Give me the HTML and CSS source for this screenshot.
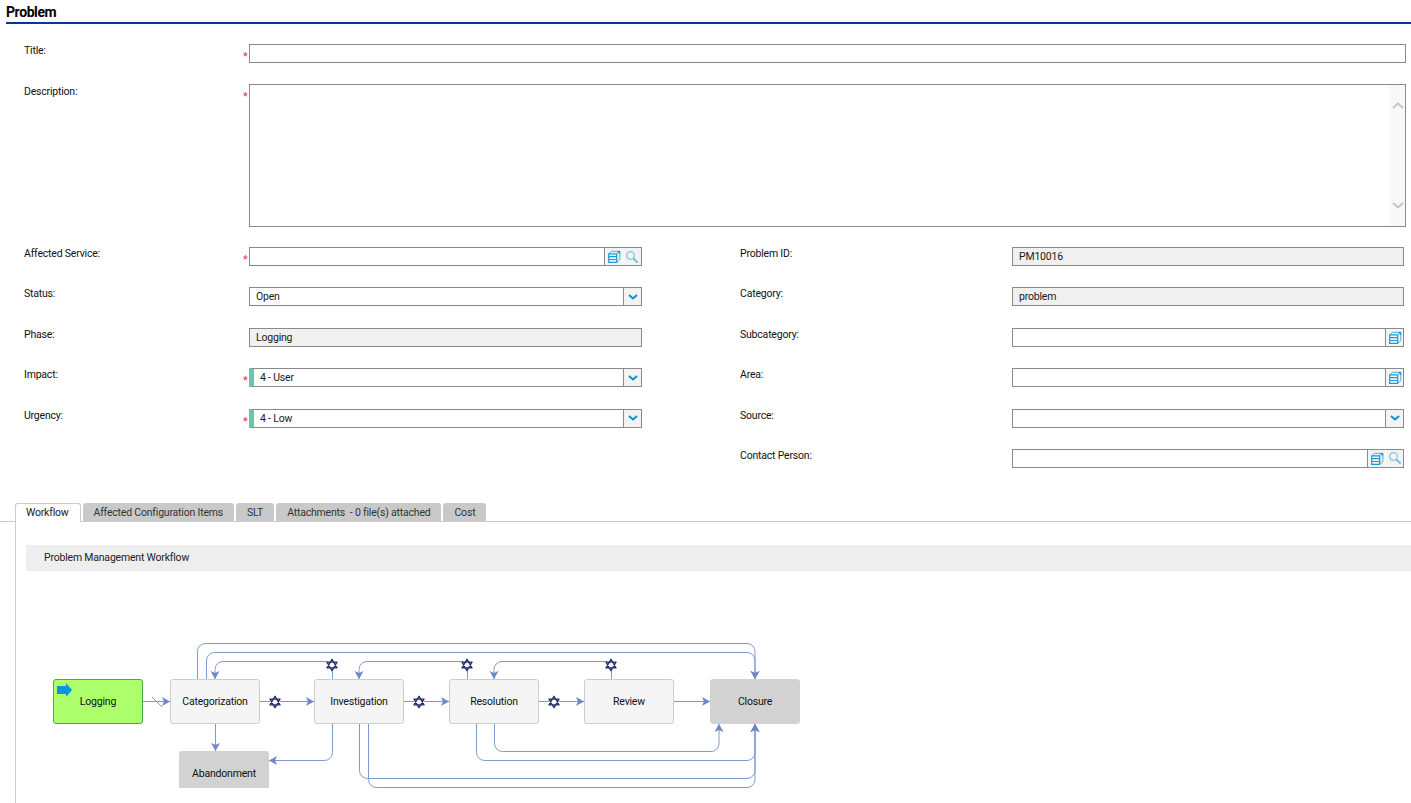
FILE: index.html
```html
<!DOCTYPE html>
<html lang="en">
<head>
<meta charset="utf-8">
<title>Problem</title>
<link rel="stylesheet" href="styles.css">
</head>
<body>
<svg class="sprite" width="0" height="0" aria-hidden="true">
  <symbol id="i-list" viewBox="0 0 14 13">
    <path d="M1.700 3.800h8v8.500h-8z M1.700 6.700h8 M1.700 9.500h8" fill="none" stroke="#1c9ad6" stroke-width="1.200"/>
    <path d="M1.700 3.800L4.500 1.300h8.300L9.700 3.800 M9.700 12.300L12.800 9.500V1.300" fill="none" stroke="#4eb1e0" stroke-width="1"/>
    <path d="M9.800 1h3.400v3.400z" fill="#1c9ad6"/>
  </symbol>
  <symbol id="i-search" viewBox="0 0 14 14">
    <circle cx="5.500" cy="5.500" r="3.800" fill="none" stroke="#86c8e8" stroke-width="1.300"/>
    <path d="M8.300 8.300L12.600 12.600" fill="none" stroke="#6dbbe0" stroke-width="1.900"/>
  </symbol>
  <symbol id="i-chev" viewBox="0 0 10 6">
    <path d="M1 1l4 3.400L9 1" fill="none" stroke="#0a8fd0" stroke-width="2"/>
  </symbol>
  <symbol id="i-gear" viewBox="-7 -7 14 14">
    <path d="M0-5.800L5 -2.900V2.900L0 5.800L-5 2.900V-2.900z" fill="#fff"/>
    <path d="M0-5.800L5 2.900H-5z M0 5.800L5 -2.900H-5z" fill="none" stroke="#1e2c68" stroke-width="1.300" stroke-linejoin="round"/>
  </symbol>
</svg>

<main class="page">
  <h1 class="title">Problem</h1>

  <form class="form">
    <div class="row row-title">
      <label class="label">Title:</label>
      <span class="star">*</span>
      <div class="field"></div>
    </div>
    <div class="row row-desc">
      <label class="label">Description:</label>
      <span class="star">*</span>
      <div class="field field-area">
        <div class="scroll">
          <svg class="scroll-arrow" width="12" height="7" viewBox="0 0 12 7"><path d="M1 6l5-4.500L11 6" fill="none" stroke="#c4c4c4" stroke-width="2"/></svg>
          <svg class="scroll-arrow" width="12" height="7" viewBox="0 0 12 7"><path d="M1 1l5 4.500L11 1" fill="none" stroke="#c4c4c4" stroke-width="2"/></svg>
        </div>
      </div>
    </div>

    <div class="columns">
      <div class="col col-left">
        <div class="row row-sm">
          <label class="label">Affected Service:</label><span class="star">*</span>
          <div class="field"><span class="value"></span>
            <span class="btn"><svg width="14" height="13"><use href="#i-list"/></svg></span>
            <span class="btn"><svg width="14" height="14"><use href="#i-search"/></svg></span>
          </div>
        </div>
        <div class="row row-sm">
          <label class="label">Status:</label><span class="star"></span>
          <div class="field"><span class="value">Open</span>
            <span class="btn"><svg width="10" height="6"><use href="#i-chev"/></svg></span>
          </div>
        </div>
        <div class="row row-sm">
          <label class="label">Phase:</label><span class="star"></span>
          <div class="field field-ro"><span class="value">Logging</span></div>
        </div>
        <div class="row row-sm">
          <label class="label">Impact:</label><span class="star">*</span>
          <div class="field field-flag"><span class="value">4 - User</span>
            <span class="btn"><svg width="10" height="6"><use href="#i-chev"/></svg></span>
          </div>
        </div>
        <div class="row row-sm">
          <label class="label">Urgency:</label><span class="star">*</span>
          <div class="field field-flag"><span class="value">4 - Low</span>
            <span class="btn"><svg width="10" height="6"><use href="#i-chev"/></svg></span>
          </div>
        </div>
      </div>

      <div class="col col-right">
        <div class="row row-sm">
          <label class="label">Problem ID:</label><span class="star"></span>
          <div class="field field-ro"><span class="value">PM10016</span></div>
        </div>
        <div class="row row-sm">
          <label class="label">Category:</label><span class="star"></span>
          <div class="field field-ro"><span class="value">problem</span></div>
        </div>
        <div class="row row-sm">
          <label class="label">Subcategory:</label><span class="star"></span>
          <div class="field"><span class="value"></span>
            <span class="btn"><svg width="14" height="13"><use href="#i-list"/></svg></span>
          </div>
        </div>
        <div class="row row-sm">
          <label class="label">Area:</label><span class="star"></span>
          <div class="field"><span class="value"></span>
            <span class="btn"><svg width="14" height="13"><use href="#i-list"/></svg></span>
          </div>
        </div>
        <div class="row row-sm">
          <label class="label">Source:</label><span class="star"></span>
          <div class="field"><span class="value"></span>
            <span class="btn"><svg width="10" height="6"><use href="#i-chev"/></svg></span>
          </div>
        </div>
        <div class="row row-sm">
          <label class="label">Contact Person:</label><span class="star"></span>
          <div class="field"><span class="value"></span>
            <span class="btn"><svg width="14" height="13"><use href="#i-list"/></svg></span>
            <span class="btn"><svg width="14" height="14"><use href="#i-search"/></svg></span>
          </div>
        </div>
      </div>
    </div>
  </form>

  <nav class="tabs">
    <a class="tab tab-active">Workflow</a>
    <a class="tab">Affected Configuration Items</a>
    <a class="tab">SLT</a>
    <a class="tab">Attachments &nbsp;- 0 file(s) attached</a>
    <a class="tab">Cost</a>
  </nav>

  <section class="panel">
    <div class="panel-head">Problem Management Workflow</div>
    <div class="canvas">
      <svg class="edges" width="800" height="158" viewBox="16 630 800 158">
        <defs>
          <marker id="arrow" markerUnits="userSpaceOnUse" markerWidth="9" markerHeight="10" viewBox="0 -5 9 10" refX="8" refY="0" orient="auto">
            <path d="M0-4.500L8 0L0 4.500L2 0z" fill="#6d88c4"/>
          </marker>
        </defs>
        <g class="edge">
          <path d="M143 701.500H170" marker-end="url(#arrow)"/>
          <path d="M152 697L162 707"/>
          <path d="M260 701.500H314" marker-end="url(#arrow)"/>
          <path d="M404 701.500H449" marker-end="url(#arrow)"/>
          <path d="M539 701.500H584" marker-end="url(#arrow)"/>
          <path d="M674 701.500H710" marker-end="url(#arrow)"/>
          <path d="M215.500 724V751" marker-end="url(#arrow)"/>
          <path d="M197.500 679V651.500a8 8 0 0 1 8-8H747a8 8 0 0 1 8 8V679" marker-end="url(#arrow)"/>
          <path d="M206.500 679V660.500a8 8 0 0 1 8-8H747a8 8 0 0 1 8 8V679" marker-end="url(#arrow)"/>
          <path d="M332.500 679V661.500H223a8 8 0 0 0-8 8V679" marker-end="url(#arrow)"/>
          <path d="M467.500 679V661.500H367a8 8 0 0 0-8 8V679" marker-end="url(#arrow)"/>
          <path d="M611.500 679V661.500H502a8 8 0 0 0-8 8V679" marker-end="url(#arrow)"/>
          <path d="M332.500 724V752.500a8 8 0 0 1-8 8H269" marker-end="url(#arrow)"/>
          <path d="M359.500 724V770.500a8 8 0 0 0 8 8H747a8 8 0 0 0 8-8V724" marker-end="url(#arrow)"/>
          <path d="M368.500 724V779.500a8 8 0 0 0 8 8H747a8 8 0 0 0 8-8V724" marker-end="url(#arrow)"/>
          <path d="M476.500 724V752.500a8 8 0 0 0 8 8H747a8 8 0 0 0 8-8V724" marker-end="url(#arrow)"/>
          <path d="M494.500 724V743.500a8 8 0 0 0 8 8H711a8 8 0 0 0 8-8V724" marker-end="url(#arrow)"/>
        </g>
        <use href="#i-gear" x="268" y="695" width="14" height="14"/>
        <use href="#i-gear" x="412" y="695" width="14" height="14"/>
        <use href="#i-gear" x="547" y="695" width="14" height="14"/>
        <use href="#i-gear" x="325" y="658" width="14" height="14"/>
        <use href="#i-gear" x="460" y="658" width="14" height="14"/>
        <use href="#i-gear" x="604" y="658" width="14" height="14"/>
      </svg>
      <div class="node node-current n-logging">
        <svg class="node-flag" width="15" height="14" viewBox="0 0 15 14"><path d="M0 3H9V0L15 7L9 14V11H0z" fill="#0796d8"/></svg>
        Logging
      </div>
      <div class="node n-categorization">Categorization</div>
      <div class="node n-investigation">Investigation</div>
      <div class="node n-resolution">Resolution</div>
      <div class="node n-review">Review</div>
      <div class="node node-end n-closure">Closure</div>
      <div class="node node-end n-abandonment">Abandonment</div>
    </div>
  </section>
</main>
</body>
</html>
```
FILE: styles.css
```css
* { box-sizing: border-box; }
html, body { margin: 0; height: 100%; overflow: hidden; background: #fff; }
body { font: 10.5px/13px Roboto, "Liberation Sans", sans-serif; letter-spacing: -.2px; color: #111; }
.sprite { position: absolute; }
.page { height: 803px; padding-top: 5px; display: flex; flex-direction: column; }

.title {
  margin: 0 0 0 6px; height: 19px; font-size: 14px; line-height: 14px; font-weight: 700;
  letter-spacing: -.4px; color: #000; border-bottom: 2px solid #0b3592;
}

.form { padding: 20px 5px 0 24px; }
.row { display: flex; align-items: flex-start; }
.label { width: 219px; flex: none; color: #111; }
.star { width: 6px; flex: none; color: #e8344a; font-size: 11px; line-height: 13px; margin-top: 6px; }
.field {
  flex: 1; min-width: 0; height: 19px; border: 1px solid #8a8a8a; background: #fff;
  display: flex; align-items: stretch;
}
.row-title { height: 40px; }
.row-desc { height: 163px; }
.row-desc .label { margin-top: 1px; }
.field-area { height: 143px; justify-content: flex-end; }
.scroll {
  width: 15px; background: #f8f8f8; display: flex; flex-direction: column;
  align-items: center; justify-content: space-between; padding: 17px 0 17px;
}
.scroll-arrow { display: block; }

.columns { display: flex; padding-right: 2px; }
.col-left { width: 618px; flex: none; margin-right: 98px; }
.col-right { flex: 1; }
.col-right .label { width: 266px; }
.row-sm { height: 40.4px; }
.value { flex: 1; padding: 0 6px; line-height: 17px; color: #1a1a1a; }
.field-ro { background: #f0f0f0; }
.field-flag { border-left: 5px solid #66c7ab; }
.btn {
  width: 18px; flex: none; background: #f3f3f3; border-left: 1px solid #8a8a8a;
  display: flex; align-items: center; justify-content: center;
}
.btn + .btn { border-left: 1px solid #fff; }
.col-left .btn + .btn { width: 19px; }

.tabs {
  margin-top: 13.6px; height: 19px; padding-left: 15px; display: flex; gap: 2px;
  border-bottom: 1px solid #ccc; flex: none;
}
.tab {
  height: 18px; padding: 0 11px; line-height: 19px; background: #c9c9c9; color: #333;
  border-radius: 3px 3px 0 0; white-space: nowrap;
}
.tab-active {
  height: 19px; padding: 0 11px 0 10px; background: #fff; color: #1a1a1a;
  border: 1px solid #ccc; border-bottom: 0; line-height: 17px;
}

.panel { flex: 1; margin-left: 15px; border-left: 1px solid #ccc; padding-top: 23px; }
.panel-head {
  margin-left: 10px; height: 26px; padding-left: 18px; background: #eee;
  line-height: 26px; color: #222;
}
.canvas { position: relative; margin-top: 59px; width: 800px; height: 158px; overflow: hidden; }
.edges { position: absolute; left: 0; top: 0; }
.edge path { fill: none; stroke: #8099cf; stroke-width: 1; }

.node {
  position: absolute; width: 90px; height: 45px; border: 1px solid #ccc; border-radius: 3px;
  background: #f5f5f5; display: flex; align-items: center; justify-content: center; color: #111;
}
.node-current { background: #aeff6c; border-color: #46a84e; }
.node-end { background: #d2d2d2; border-color: #d2d2d2; }
.node-flag { position: absolute; left: 3px; top: 3px; }
.n-logging { left: 37px; top: 49px; }
.n-categorization { left: 154px; top: 49px; }
.n-investigation { left: 298px; top: 49px; }
.n-resolution { left: 433px; top: 49px; }
.n-review { left: 568px; top: 49px; }
.n-closure { left: 694px; top: 49px; }
.n-abandonment { left: 163px; top: 121px; }
```
